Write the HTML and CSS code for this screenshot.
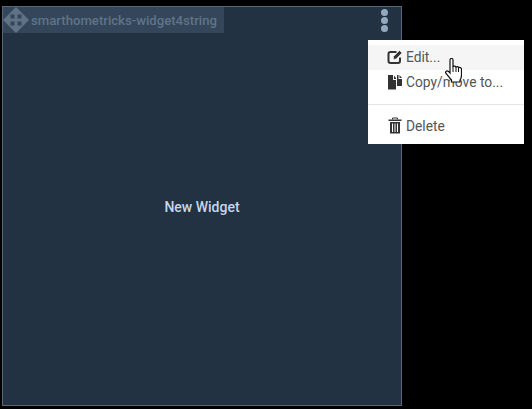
FILE: index.html
```html
<!DOCTYPE html>
<html lang="en">
<head>
    <meta charset="UTF-8">
    <title>Widget</title>
    <link rel="stylesheet" href="styles.css">
</head>
<body>

    <div class="widget">
        <div class="widget-tag">
            <svg class="move-icon" width="26" height="26" viewBox="0 0 26 26">
                <path d="M13 0 L26 13 L13 26 L0 13 Z" fill="#5f7286"/>
                <path d="M7.500 7.500 H11.500 V11.500 H7.500 Z M14.500 7.500 H18.500 V11.500 H14.500 Z M7.500 14.500 H11.500 V18.500 H7.500 Z M14.500 14.500 H18.500 V18.500 H14.500 Z" fill="#33465a"/>
            </svg>
            <span class="widget-name">smarthometricks-widget4string</span>
        </div>
        <div class="widget-dots"><i></i><i></i><i></i></div>
        <div class="widget-title">New Widget</div>
    </div>

    <div class="menu">
        <div class="menu-item active">
            <svg class="menu-icon" width="16" height="16" viewBox="0 0 16 16">
                <path d="M9.500 3 H3.500 Q1.500 3 1.500 5 V12 Q1.500 14 3.500 14 H11 Q13 14 13 12 V8.500" fill="none" stroke="#333" stroke-width="2"/>
                <path d="M6.500 7.500 L12.500 1.500 L15 4 L9 10 L6.500 10.500 Z" fill="#333" stroke="#f5f5f5" stroke-width="0.600"/>
            </svg>
            Edit...
        </div>
        <div class="menu-item">
            <svg class="menu-icon" width="16" height="16" viewBox="0 0 16 16">
                <path d="M1 1 H6 V6 H9 V15.500 H1 Z" fill="#333"/>
                <path d="M7 1.500 L9 4 V5 H7 Z" fill="#333"/>
                <path d="M10 1 H11.500 V5 H15 V12 H10 Z" fill="#333"/>
                <path d="M12.500 1 L15 4 H12.500 Z" fill="#333"/>
            </svg>
            Copy/move to...
        </div>
        <div class="menu-divider"></div>
        <div class="menu-item">
            <svg class="menu-icon" width="16" height="17" viewBox="0 0 16 17">
                <path d="M5.500 2.500 V1 H10.500 V2.500" fill="none" stroke="#333"/>
                <path d="M1.500 2.500 H14.500 V4 H1.500 Z" fill="#333"/>
                <path d="M3 5 H13 V16.500 H3 Z M5 6.500 V15 H6 V6.500 Z M7.500 6.500 V15 H8.500 V6.500 Z M10 6.500 V15 H11 V6.500 Z" fill="#333" fill-rule="evenodd"/>
            </svg>
            Delete
        </div>
    </div>

    <svg class="hand-cursor" width="17" height="25" viewBox="0 0 17 25">
        <path d="M5 2 Q5 0.500 6.500 0.500 Q8 0.500 8 2 V8.500 Q10 7.500 11 9 Q13 8 13.500 9.500 Q16 9 16.500 11 V17 Q16.500 20 15 22 V24 H6.500 V22 L1 15.500 Q0 14 1.500 13 Q3 12.500 5 15 Z" fill="#fff" stroke="#111" stroke-width="1.200"/>
        <path d="M8 8.500 V14 M11 9 V14 M13.500 9.500 V14" stroke="#111" fill="none"/>
    </svg>

</body>
</html>
```

FILE: styles.css
```css
html, body { margin: 0; height: 100%; }
body { background: #000; padding: 6px 0 0 2px; box-sizing: border-box; overflow: hidden; font-family: Roboto, Arial, sans-serif; }

.widget { position: relative; width: 400px; height: 400px; box-sizing: border-box; padding-top: 2px; background: #223243; border: 1px solid #56687a; display: flex; align-items: center; justify-content: center; }
.widget-title { color: #c5d8ea; font-size: 14px; font-weight: 500; }

.widget-tag { position: absolute; top: 0; left: 0; height: 26px; width: 221px; background: #33465a; display: flex; align-items: center; }
.move-icon { flex: none; margin-right: 2px; }
.widget-name { color: #607487; font-size: 13.150px; font-weight: 500; white-space: nowrap; }

.widget-dots { position: absolute; top: 2px; right: 13px; display: flex; flex-direction: column; gap: 1px; }
.widget-dots i { display: block; width: 7px; height: 7px; border-radius: 50%; background: #92a9bd; }

.menu { position: absolute; left: 368px; top: 40px; width: 156px; height: 104px; box-sizing: border-box; padding-top: 5px; background: #fff; color: #555; font-size: 13.800px; }
.menu-item { display: flex; align-items: center; gap: 3px; height: 25px; box-sizing: border-box; padding: 0 0 2px 19px; }
.menu-item.active { background: #f5f5f5; }
.menu-icon { flex: none; }
.menu-divider { height: 1px; background: #e5e5e5; margin: 9px 0 9px; }

.hand-cursor { position: absolute; left: 445px; top: 58px; }
```
